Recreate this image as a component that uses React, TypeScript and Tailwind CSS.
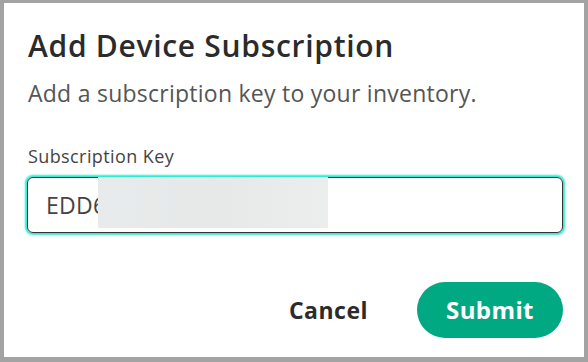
import React from "react";

export default function App() {
  return (
    <div className="w-[588px] h-[362px] bg-white border-[#a3a3a3] border-t-[3px] border-l-4 border-r-4 border-b-[5px] box-border flex flex-col pl-[23px] pr-[21px] pt-[23px] font-['Open_Sans',sans-serif]">
      <h1 className="text-[30px] leading-[40px] font-semibold tracking-[0.7px] text-[#2b2b2b] pl-px">Add Device Subscription</h1>
      <p className="text-[23px] leading-[30px] tracking-[0.25px] text-[#555555] mt-[12px] pl-px">Add a subscription key to your inventory.</p>
      <label className="text-[18px] leading-[24px] tracking-[0.4px] text-[#444444] mt-[36px] pl-px">Subscription Key</label>
      <div className="relative mt-[9px] h-[56px] rounded-[6px] border border-[#333333] shadow-[0_0_2px_2px_#2ee8d0] flex items-center pl-[18px]">
        <span className="text-[23px] text-[#444444] font-medium tracking-[0.3px]">EDD6</span>
        <div className="absolute left-[70px] top-[-1px] w-[230px] h-[51px] bg-gradient-to-r from-[#e8ebeb] via-[#e6e9e8] to-[#eceeee]" />
      </div>
      <div className="flex items-center justify-end mt-[49px] gap-[49px]">
        <button className="text-[23px] font-bold tracking-[0.5px] text-[#2b2b2b]">Cancel</button>
        <button className="h-[56px] w-[146px] rounded-full bg-[#01a982] text-white text-[24px] font-bold tracking-[0.4px]">Submit</button>
      </div>
    </div>
  );
}
